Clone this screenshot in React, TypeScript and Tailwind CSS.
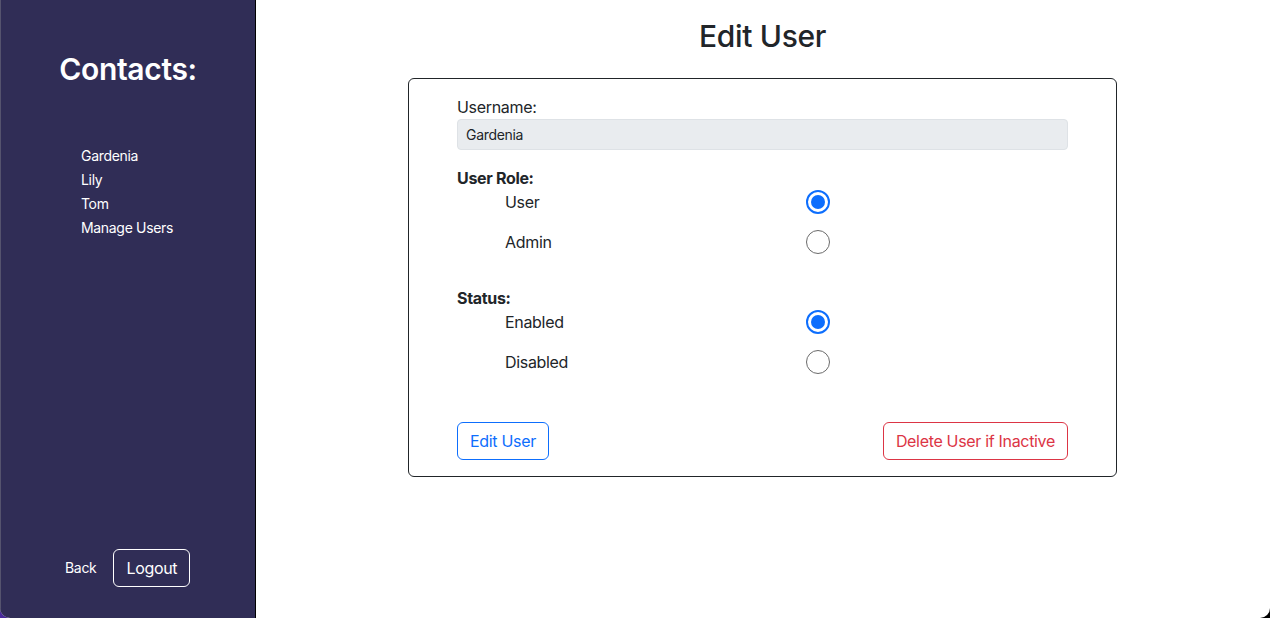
import { useState } from 'react';

const contacts = ['Gardenia', 'Lily', 'Tom', 'Manage Users'];

function Radio({ checked, onClick }: { checked: boolean; onClick: () => void }) {
  return (
    <button
      type="button"
      onClick={onClick}
      className={
        checked
          ? 'flex size-6 items-center justify-center rounded-full border-2 border-[#0d6efd] bg-white'
          : 'flex size-6 items-center justify-center rounded-full border border-[#6b6b6b] bg-white'
      }
    >
      {checked && <span className="size-[14px] rounded-full bg-[#0d6efd]" />}
    </button>
  );
}

function RadioGroup({
  title,
  options,
  value,
  onChange,
}: {
  title: string;
  options: string[];
  value: string;
  onChange: (v: string) => void;
}) {
  return (
    <div>
      <div className="h-6 text-base font-bold leading-6">{title}</div>
      {options.map((opt) => (
        <div key={opt} className="grid h-10 grid-cols-[349px_24px] items-start">
          <span className="pl-12 text-base leading-6">{opt}</span>
          <Radio checked={value === opt} onClick={() => onChange(opt)} />
        </div>
      ))}
    </div>
  );
}

export default function App() {
  const [role, setRole] = useState('User');
  const [status, setStatus] = useState('Enabled');

  return (
    <div
      className="h-[618px] w-[1270px] bg-[linear-gradient(90deg,#4a2a9e_0%,#000_8%,#000_100%)] tracking-[-0.02em]"
      style={{ fontFamily: 'Inter, "Noto Sans", sans-serif' }}
    >
      <div className="flex h-full overflow-hidden rounded-b-[10px] bg-white">
        {/* Sidebar */}
        <aside className="flex w-[256px] shrink-0 flex-col border-r border-l border-r-black border-l-[#55536e] bg-[#302d56] text-white">
          <h2 className="mt-[51px] text-center text-[30px] font-semibold leading-9">Contacts:</h2>
          <ul className="mt-[57px] pl-[80px] text-sm">
            {contacts.map((c) => (
              <li key={c} className="h-6 leading-6">
                {c}
              </li>
            ))}
          </ul>
          <div className="mt-auto mb-[31px] flex items-center pl-[64px]">
            <span className="text-sm">Back</span>
            <button
              type="button"
              className="ml-[17px] h-[38px] rounded-md border border-white px-3 text-base text-white"
            >
              Logout
            </button>
          </div>
        </aside>

        {/* Main */}
        <main className="-ml-px flex flex-1 flex-col items-center text-[#212529]">
          <h1 className="mt-[17px] text-[30px] font-medium leading-[38px]">Edit User</h1>
          <div className="mt-[23px] w-[709px] rounded-md border border-[#212529] px-12 pt-[16px] pb-4">
            <label className="block text-base leading-6">Username:</label>
            <div className="h-[31px] rounded border border-[#dee2e6] bg-[#e9ecef] px-2 text-sm leading-[29px]">
              Gardenia
            </div>

            <div className="mt-4">
              <RadioGroup
                title="User Role:"
                options={['User', 'Admin']}
                value={role}
                onChange={setRole}
              />
            </div>
            <div className="mt-4">
              <RadioGroup
                title="Status:"
                options={['Enabled', 'Disabled']}
                value={status}
                onChange={setStatus}
              />
            </div>

            <div className="mt-[32px] flex justify-between">
              <button
                type="button"
                className="h-[38px] rounded-md border border-[#0d6efd] px-3 text-base text-[#0d6efd]"
              >
                Edit User
              </button>
              <button
                type="button"
                className="h-[38px] rounded-md border border-[#dc3545] px-3 text-base text-[#dc3545]"
              >
                Delete User if Inactive
              </button>
            </div>
          </div>
        </main>
      </div>
    </div>
  );
}
